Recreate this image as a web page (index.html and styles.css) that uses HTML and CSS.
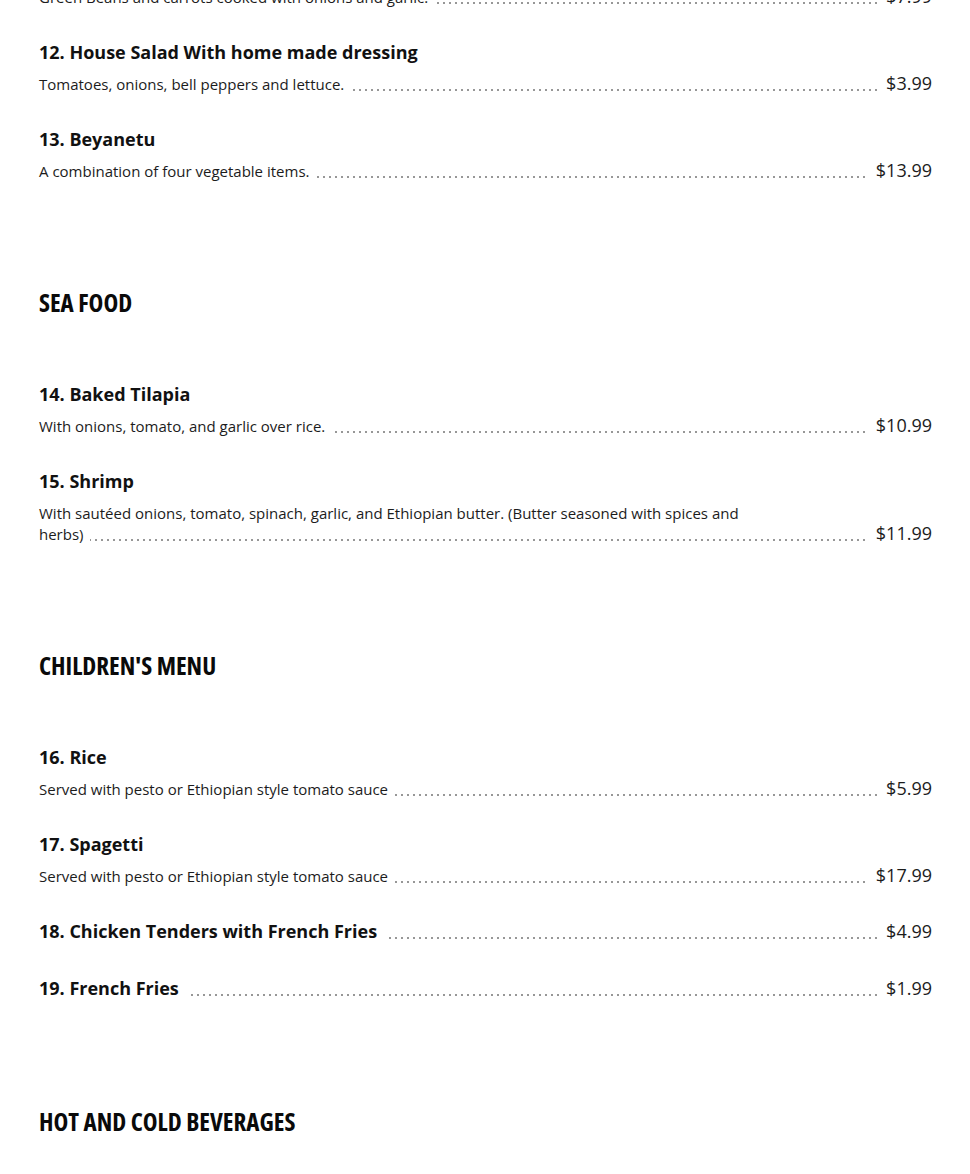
FILE: index.html
```html
<!DOCTYPE html>
<html lang="en">
<head>
<meta charset="utf-8">
<title>Menu</title>
<link rel="stylesheet" href="styles.css">
</head>
<body>
<main class="menu">
  <section class="section section--cut">
    <div class="item">
      <h3 class="item-title">11. Fosolia</h3>
      <div class="line"><p class="desc"><span>Green Beans and carrots cooked with onions and garlic.</span></p><span class="price">$7.99</span></div>
    </div>
    <div class="item">
      <h3 class="item-title">12. House Salad With home made dressing</h3>
      <div class="line"><p class="desc"><span>Tomatoes, onions, bell peppers and lettuce.</span></p><span class="price">$3.99</span></div>
    </div>
    <div class="item">
      <h3 class="item-title">13. Beyanetu</h3>
      <div class="line"><p class="desc"><span>A combination of four vegetable items.</span></p><span class="price">$13.99</span></div>
    </div>
  </section>

  <section class="section">
    <h2 class="section-title">SEA FOOD</h2>
    <div class="item">
      <h3 class="item-title">14. Baked Tilapia</h3>
      <div class="line"><p class="desc"><span>With onions, tomato, and garlic over rice.</span></p><span class="price">$10.99</span></div>
    </div>
    <div class="item">
      <h3 class="item-title">15. Shrimp</h3>
      <div class="line"><p class="desc desc--narrow"><span>With sautéed onions, tomato, spinach, garlic, and Ethiopian butter. (Butter seasoned with spices and herbs)</span></p><span class="price">$11.99</span></div>
    </div>
  </section>

  <section class="section">
    <h2 class="section-title">CHILDREN'S MENU</h2>
    <div class="item">
      <h3 class="item-title">16. Rice</h3>
      <div class="line"><p class="desc"><span>Served with pesto or Ethiopian style tomato sauce</span></p><span class="price">$5.99</span></div>
    </div>
    <div class="item">
      <h3 class="item-title">17. Spagetti</h3>
      <div class="line"><p class="desc"><span>Served with pesto or Ethiopian style tomato sauce</span></p><span class="price">$17.99</span></div>
    </div>
    <div class="item item--single">
      <div class="line line--title"><h3 class="item-title"><span>18. Chicken Tenders with French Fries</span></h3><span class="price">$4.99</span></div>
    </div>
    <div class="item item--single">
      <div class="line line--title"><h3 class="item-title"><span>19. French Fries</span></h3><span class="price">$1.99</span></div>
    </div>
  </section>

  <section class="section">
    <h2 class="section-title">HOT AND COLD BEVERAGES</h2>
  </section>
</main>
</body>
</html>
```

FILE: styles.css
```css
html, body {
  margin: 0;
  padding: 0;
  background: #fff;
}

body {
  font-family: "Open Sans", "Liberation Sans", sans-serif;
  color: #1a1a1a;
}

.menu {
  margin-top: -47px;
  padding: 0 38px 0 39px;
}

.section {
  padding-bottom: 72px;
}

.section-title {
  margin: 0 0 64px;
  font-family: "Open Sans", "Liberation Sans", sans-serif;
  font-stretch: 75%;
  font-weight: 700;
  font-size: 25px;
  line-height: 32px;
  color: #0a0a0a;
}

.item {
  margin-bottom: 32px;
}

.item--single {
  margin-bottom: 33px;
}

.item-title {
  margin: 0 0 7px;
  font-size: 18px;
  line-height: 24px;
  font-weight: 700;
  color: #111;
}

.line {
  display: flex;
  justify-content: space-between;
  align-items: flex-end;
  background-image: radial-gradient(circle at 3px 1px, #8a8a8a 0.65px, transparent 1.15px);
  background-size: 6px 2px;
  background-repeat: repeat-x;
  background-position: 0 calc(100% - 4px);
}

.desc {
  margin: 0;
  padding-top: 3px;
  font-size: 15px;
  line-height: 21px;
  color: #1c1c1c;
}

.desc--narrow {
  max-width: 705px;
}

.desc span,
.line--title .item-title span {
  background: #fff;
  padding-right: 6px;
}

.line--title .item-title {
  margin: 0;
}

.line--title .item-title span {
  padding-right: 10px;
}

.price {
  flex: none;
  background: #fff;
  padding-left: 9px;
  font-size: 18px;
  line-height: 24px;
  color: #1c1c1c;
}
```
